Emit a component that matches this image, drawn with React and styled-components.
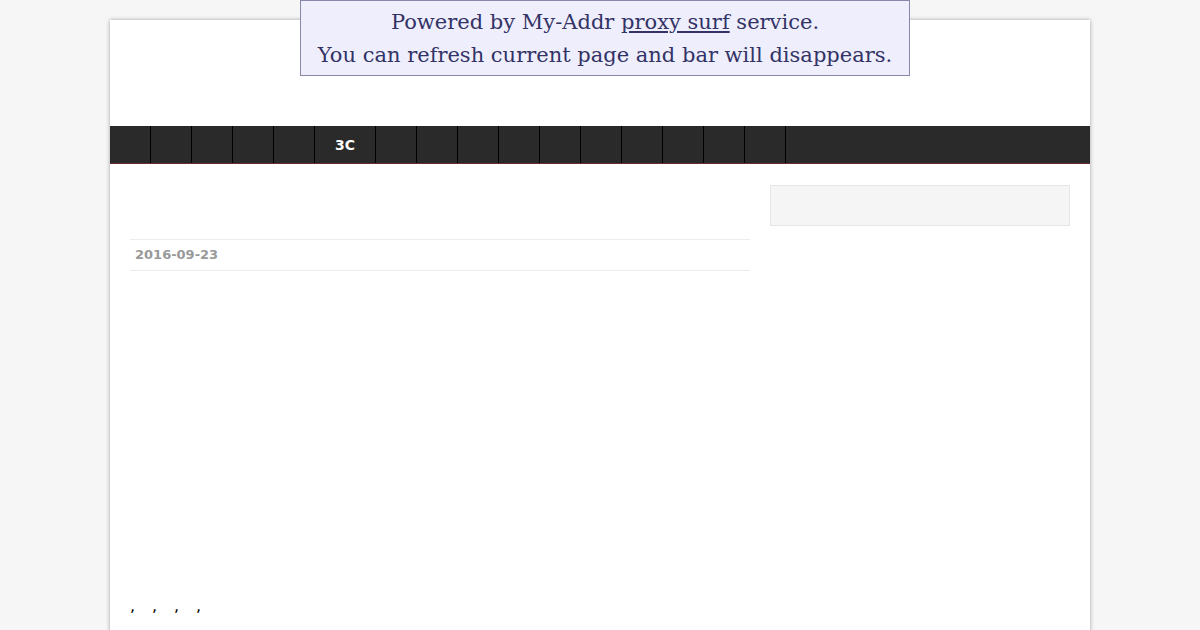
import styled, { createGlobalStyle } from "styled-components";

const Global = createGlobalStyle`
    html, body {
        margin: 0;
        padding: 0;
        background: #f6f6f6;
        font-family: "DejaVu Sans", sans-serif;
    }
`;

const Page = styled.div`
    padding-top: 20px;
    height: 610px;
    overflow: hidden;
`;

const Wrapper = styled.div`
    width: 980px;
    margin: 0 auto;
    background: #fff;
    min-height: 640px;
    box-shadow: 0 0 4px rgba(0, 0, 0, 0.35);
`;

const Header = styled.div`
    height: 106px;
`;

const Nav = styled.ul`
    display: flex;
    margin: 0;
    padding: 0;
    list-style: none;
    height: 37px;
    background: #2a2a2a;
    border-bottom: 1px solid #6b2b2b;
`;

const NavItem = styled.li`
    display: flex;
    align-items: center;
    padding: 0 20px;
    border-right: 1px solid #000;
    color: #fff;
    font-weight: bold;
    font-size: 14px;
`;

const Main = styled.div`
    display: flex;
    gap: 20px;
    padding: 21px 20px 0;
`;

const Content = styled.div`
    width: 620px;
    display: flex;
    flex-direction: column;
`;

const Title = styled.div`
    height: 54px;
`;

const Meta = styled.div`
    border-top: 1px solid #ececec;
    border-bottom: 1px solid #ececec;
    padding: 0 5px 2px;
    height: 28px;
    display: flex;
    align-items: center;
    font-size: 13px;
    font-weight: bold;
    color: #999;
`;

const Body = styled.div`
    height: 325px;
`;

const Tags = styled.div`
    display: flex;
    font-size: 16px;
    color: #000;
`;

const Tag = styled.span`
    width: 22px;
`;

const Sidebar = styled.div`
    width: 300px;
`;

const SideBox = styled.div`
    height: 39px;
    background: #f5f5f5;
    border: 1px solid #e6e6e6;
`;

const ProxyBar = styled.div`
    position: absolute;
    top: 0;
    left: 300px;
    width: 608px;
    height: 69px;
    padding-top: 5px;
    background: #eeeefc;
    border: 1px solid #8888aa;
    color: #333366;
    font-family: "DejaVu Serif", serif;
    font-size: 21px;
    line-height: 33px;
    text-align: center;
`;

const ProxyLink = styled.a`
    color: #333366;
    text-decoration: underline;
`;

const items = ["", "", "", "", "", "3C", "", "", "", "", "", "", "", "", "", ""];

export default function App() {
    return (
        <>
            <Global />
            <Page>
                <Wrapper>
                    <Header />
                    <Nav>
                        {items.map((item, i) => (
                            <NavItem key={i}>{item}</NavItem>
                        ))}
                    </Nav>
                    <Main>
                        <Content>
                            <Title />
                            <Meta>2016-09-23</Meta>
                            <Body />
                            <Tags>
                                <Tag>,</Tag>
                                <Tag>,</Tag>
                                <Tag>,</Tag>
                                <Tag>,</Tag>
                            </Tags>
                        </Content>
                        <Sidebar>
                            <SideBox />
                        </Sidebar>
                    </Main>
                </Wrapper>
            </Page>
            <ProxyBar>
                Powered by My-Addr <ProxyLink href="#">proxy surf</ProxyLink> service.
                <br />
                You can refresh current page and bar will disappears.
            </ProxyBar>
        </>
    );
}
